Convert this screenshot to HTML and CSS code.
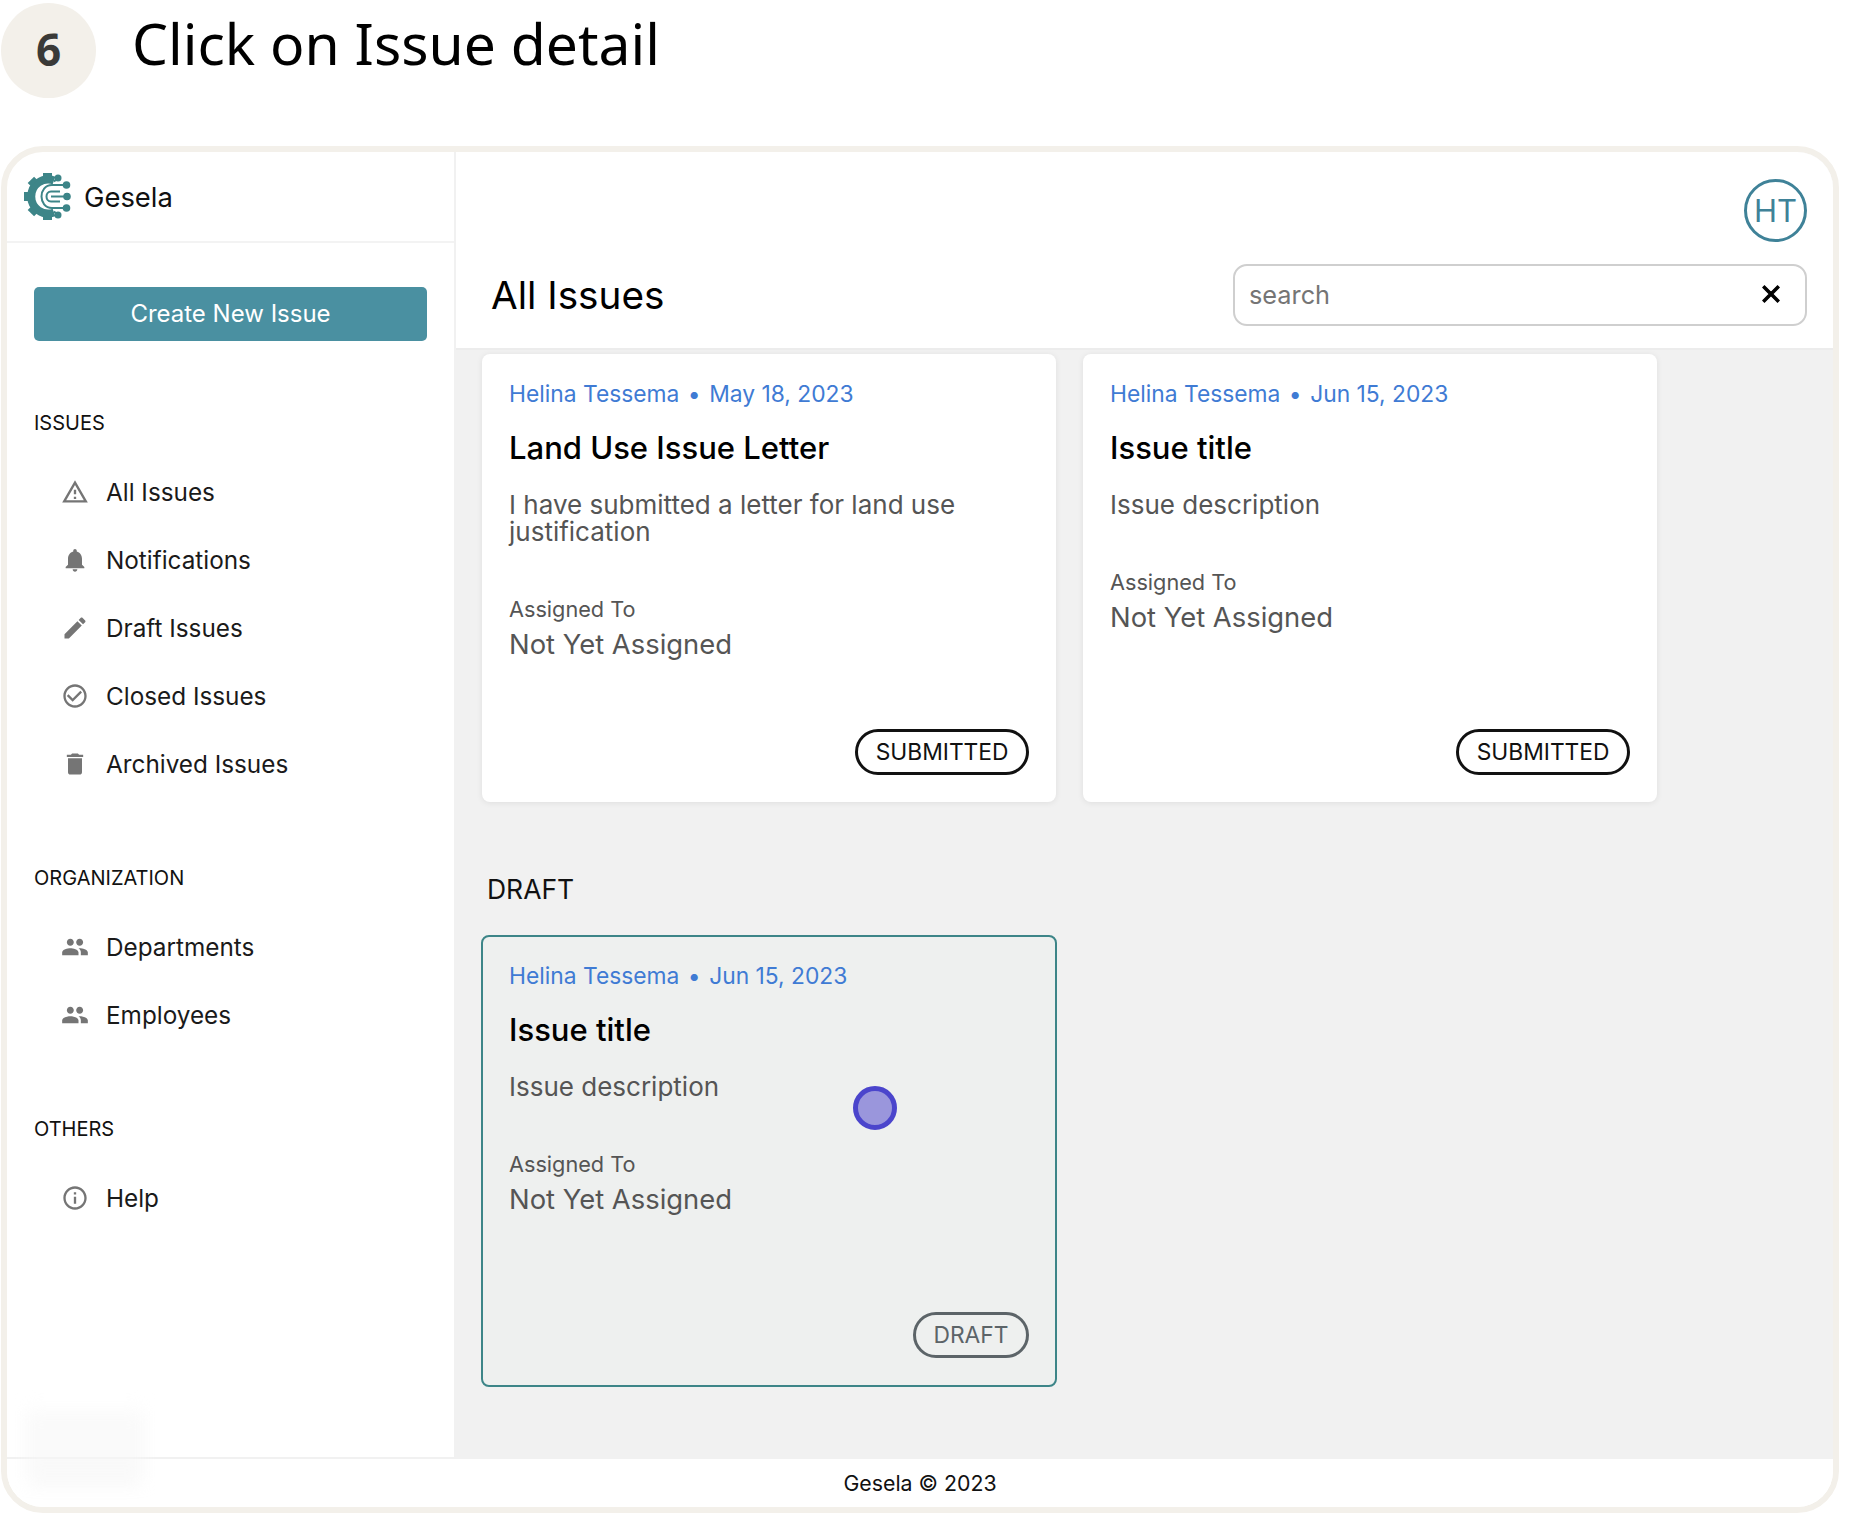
FILE: index.html
```html
<!DOCTYPE html>
<html lang="en">

<head>
  <meta charset="UTF-8">
  <meta name="viewport" content="width=device-width, initial-scale=1.0">
  <title>Click on Issue detail</title>
  <link rel="stylesheet" href="styles.css">
</head>

<body>
  <!--step heading-->
  <div class="step">
    <div class="step-num">6</div>
    <h1 class="step-title">Click on Issue detail</h1>
  </div>

  <div class="frame">
    <div class="app">
      <aside class="sidebar">
        <div class="brand">
          <svg class="logo" viewBox="0 0 47 49" fill="none" stroke="#3d8588">
            <path d="M30 8.500A17 17 0 1 0 30 40.500" stroke-width="8" />
            <g fill="#3d8588" stroke="none">
              <rect x="19" y="1" width="9" height="5" />
              <rect x="19" y="1" width="9" height="5" transform="rotate(-45 23.500 24.500)" />
              <rect x="19" y="1" width="9" height="5" transform="rotate(-90 23.500 24.500)" />
              <rect x="19" y="1" width="9" height="5" transform="rotate(-135 23.500 24.500)" />
              <rect x="19" y="1" width="9" height="5" transform="rotate(180 23.500 24.500)" />
              <circle cx="34" cy="6" r="3.500" />
              <circle cx="42.500" cy="13" r="3.800" />
              <circle cx="43" cy="24.500" r="3.800" />
              <circle cx="42.500" cy="36" r="3.800" />
              <circle cx="34" cy="43" r="3.500" />
            </g>
            <path d="M40 13H28C21 13 17.500 19 17.500 24.500S21 36 28 36H40" stroke-width="2" />
            <path d="M41 24.500H27M36 19.500H27C24 19.500 22.500 22 22.500 24.500S24 29.500 27 29.500H36" stroke-width="2" />
            <path d="M30 9.500 34 6M30 39.500 34 43" stroke-width="2" />
          </svg>
          <span class="brand-name">Gesela</span>
        </div>

        <button class="create-btn">Create New Issue</button>

        <div class="nav-label first">ISSUES</div>
        <a class="nav-item"><svg class="nav-icon" viewBox="0 0 24 24"><path d="M12 5.99L19.53 19H4.47L12 5.99M12 2L1 21h22L12 2zm1 14h-2v2h2v-2zm0-6h-2v4h2v-4z" /></svg>All Issues</a>
        <a class="nav-item"><svg class="nav-icon" viewBox="0 0 24 24"><path d="M12 22c1.1 0 2-.9 2-2h-4c0 1.1.89 2 2 2zm6-6v-5c0-3.07-1.64-5.64-4.5-6.32V4c0-.83-.67-1.5-1.5-1.5s-1.5.67-1.5 1.5v.68C7.63 5.36 6 7.92 6 11v5l-2 2v1h16v-1l-2-2z" /></svg>Notifications</a>
        <a class="nav-item"><svg class="nav-icon" viewBox="0 0 24 24"><path d="M3 17.25V21h3.75L17.81 9.94l-3.75-3.75L3 17.25zM20.71 7.04c.39-.39.39-1.02 0-1.41l-2.34-2.34c-.39-.39-1.02-.39-1.41 0l-1.83 1.83 3.75 3.75 1.83-1.83z" /></svg>Draft Issues</a>
        <a class="nav-item"><svg class="nav-icon" viewBox="0 0 24 24"><path d="M16.59 7.58 10 14.17l-3.59-3.58L5 12l5 5 8-8zM12 2C6.48 2 2 6.48 2 12s4.48 10 10 10 10-4.48 10-10S17.52 2 12 2zm0 18c-4.42 0-8-3.58-8-8s3.58-8 8-8 8 3.58 8 8-3.58 8-8 8z" /></svg>Closed Issues</a>
        <a class="nav-item"><svg class="nav-icon" viewBox="0 0 24 24"><path d="M6 19c0 1.1.9 2 2 2h8c1.1 0 2-.9 2-2V7H6v12zM19 4h-3.5l-1-1h-5l-1 1H5v2h14V4z" /></svg>Archived Issues</a>

        <div class="nav-label">ORGANIZATION</div>
        <a class="nav-item"><svg class="nav-icon" viewBox="0 0 24 24"><path d="M16 11c1.66 0 2.99-1.34 2.99-3S17.66 5 16 5c-1.66 0-3 1.34-3 3s1.34 3 3 3zm-8 0c1.66 0 2.99-1.34 2.99-3S9.66 5 8 5C6.34 5 5 6.34 5 8s1.34 3 3 3zm0 2c-2.33 0-7 1.17-7 3.5V19h14v-2.5c0-2.33-4.67-3.5-7-3.5zm8 0c-.29 0-.62.02-.97.05 1.16.84 1.97 1.97 1.97 3.45V19h6v-2.5c0-2.33-4.67-3.5-7-3.5z" /></svg>Departments</a>
        <a class="nav-item"><svg class="nav-icon" viewBox="0 0 24 24"><path d="M16 11c1.66 0 2.99-1.34 2.99-3S17.66 5 16 5c-1.66 0-3 1.34-3 3s1.34 3 3 3zm-8 0c1.66 0 2.99-1.34 2.99-3S9.66 5 8 5C6.34 5 5 6.34 5 8s1.34 3 3 3zm0 2c-2.33 0-7 1.17-7 3.5V19h14v-2.5c0-2.33-4.67-3.5-7-3.5zm8 0c-.29 0-.62.02-.97.05 1.16.84 1.97 1.97 1.97 3.45V19h6v-2.5c0-2.33-4.67-3.5-7-3.5z" /></svg>Employees</a>

        <div class="nav-label">OTHERS</div>
        <a class="nav-item"><svg class="nav-icon" viewBox="0 0 24 24"><path d="M11 7h2v2h-2zm0 4h2v6h-2zm1-9C6.48 2 2 6.48 2 12s4.48 10 10 10 10-4.48 10-10S17.52 2 12 2zm0 18c-4.42 0-8-3.58-8-8s3.58-8 8-8 8 3.58 8 8-3.58 8-8 8z" /></svg>Help</a>
      </aside>

      <main class="main">
        <header class="topbar">
          <div class="avatar">HT</div>
          <div class="title-row">
            <h2 class="page-title">All Issues</h2>
            <div class="search">
              <span class="search-text">search</span>
              <svg class="search-x" viewBox="0 0 24 24"><path d="M19 6.41 17.59 5 12 10.59 6.41 5 5 6.41 10.59 12 5 17.59 6.41 19 12 13.41 17.59 19 19 17.59 13.41 12z" /></svg>
            </div>
          </div>
        </header>

        <div class="content">
          <div class="card-row">
            <div class="card">
              <div class="meta"><span>Helina Tessema</span><span class="dot">•</span><span>May 18, 2023</span></div>
              <div class="card-title">Land Use Issue Letter</div>
              <p class="card-desc">I have submitted a letter for land use justification</p>
              <div class="assigned">Assigned To</div>
              <div class="assignee">Not Yet Assigned</div>
              <div class="card-foot"><span class="badge">SUBMITTED</span></div>
            </div>
            <div class="card">
              <div class="meta"><span>Helina Tessema</span><span class="dot">•</span><span>Jun 15, 2023</span></div>
              <div class="card-title">Issue title</div>
              <p class="card-desc">Issue description</p>
              <div class="assigned">Assigned To</div>
              <div class="assignee">Not Yet Assigned</div>
              <div class="card-foot"><span class="badge">SUBMITTED</span></div>
            </div>
          </div>

          <div class="group-label">DRAFT</div>
          <div class="card-row">
            <div class="card card-draft">
              <div class="meta"><span>Helina Tessema</span><span class="dot">•</span><span>Jun 15, 2023</span></div>
              <div class="card-title">Issue title</div>
              <p class="card-desc">Issue description</p>
              <div class="assigned">Assigned To</div>
              <div class="assignee">Not Yet Assigned</div>
              <div class="card-foot"><span class="badge badge-draft">DRAFT</span></div>
              <!--click marker-->
              <div class="click-dot"></div>
            </div>
          </div>
        </div>
      </main>
    </div>

    <footer class="footer">Gesela © 2023</footer>
    <div class="smudge"></div>
  </div>
</body>

</html>
```

FILE: styles.css
```css
* {
  margin: 0;
  padding: 0;
  box-sizing: border-box;
}

body {
  background-color: #fff;
  font-family: Inter, "Liberation Sans", sans-serif;
  color: #111;
}

/*step heading*/
.step {
  height: 146px;
  display: flex;
  align-items: flex-start;
  padding: 3px 0 0 1px;
  gap: 36px;
}

.step-num {
  width: 95px;
  height: 95px;
  padding-bottom: 4px;
  border-radius: 50%;
  background-color: #f3f0ea;
  color: #3a3a38;
  font-family: "Noto Sans", sans-serif;
  font-weight: 700;
  font-size: 44px;
  display: flex;
  align-items: center;
  justify-content: center;
}

.step-title {
  font-family: "Noto Sans", sans-serif;
  font-weight: 400;
  font-size: 57px;
  line-height: 80px;
  color: #000;
}

/*outer frame*/
.frame {
  position: relative;
  width: 1838px;
  height: 1367px;
  margin-left: 1px;
  border: 6px solid #f3f0ea;
  border-radius: 42px;
  overflow: hidden;
  display: flex;
  flex-direction: column;
}

.app {
  flex: 1;
  display: flex;
  min-height: 0;
}

/*sidebar*/
.sidebar {
  width: 449px;
  flex-shrink: 0;
  border-right: 2px solid #f1f1f1;
}

.brand {
  height: 91px;
  padding: 20px 0 0 17px;
  display: flex;
  align-items: flex-start;
  gap: 13px;
  border-bottom: 2px solid #f3f3f3;
}

.logo {
  width: 47px;
  height: 49px;
  flex-shrink: 0;
}

.brand-name {
  font-size: 27.400px;
  line-height: 51px;
}

.create-btn {
  display: block;
  width: 393px;
  height: 54px;
  margin: 44px 0 0 27px;
  padding-bottom: 1px;
  border: none;
  border-radius: 5px;
  background-color: #4a90a1;
  color: #fff;
  font-family: inherit;
  font-size: 24px;
}

.nav-label {
  margin: 68px 0 23px 27px;
  font-size: 20px;
  line-height: 24px;
}

.nav-label.first {
  margin-top: 70px;
}

.nav-item {
  height: 68px;
  display: flex;
  align-items: center;
  padding-left: 54px;
  gap: 17px;
  font-size: 24.300px;
  color: #1a1a1a;
}

.nav-icon {
  width: 28px;
  height: 28px;
  fill: #757575;
  flex-shrink: 0;
}

/*main area*/
.main {
  flex: 1;
  display: flex;
  flex-direction: column;
  background-color: #f1f1f1;
  min-width: 0;
}

.topbar {
  height: 198px;
  background-color: #fff;
  border-bottom: 2px solid #ececec;
  padding: 27px 26px 0 35px;
}

.avatar {
  width: 63px;
  height: 63px;
  margin-left: auto;
  border: 3px solid #3f8298;
  border-radius: 50%;
  color: #3f8298;
  font-size: 31px;
  display: flex;
  align-items: center;
  justify-content: center;
}

.title-row {
  display: flex;
  align-items: center;
  justify-content: space-between;
  margin-top: 22px;
}

.page-title {
  font-weight: 400;
  font-size: 38.700px;
  color: #000;
}

.search {
  width: 574px;
  height: 62px;
  border: 2px solid #cfcfcf;
  border-radius: 14px;
  background-color: #fff;
  display: flex;
  align-items: center;
  justify-content: space-between;
  padding: 0 20px 2px 14px;
}

.search-text {
  font-size: 25.300px;
  color: #757575;
}

.search-x {
  width: 28px;
  height: 28px;
  fill: #000;
  stroke: #000;
  stroke-width: 1;
}

.content {
  flex: 1;
  padding: 4px 0 0 26px;
}

.card-row {
  display: grid;
  grid-template-columns: 574px 574px;
  column-gap: 27px;
}

/*issue cards*/
.card {
  position: relative;
  height: 448px;
  padding: 25px 27px 27px 27px;
  background-color: #fff;
  border-radius: 8px;
  box-shadow: 0 1px 6px rgba(0, 0, 0, 0.08);
  display: flex;
  flex-direction: column;
}

.card-draft {
  height: 452px;
  margin: 0 -1px;
  padding: 24px 26px 27px 26px;
  background-color: #eef0ef;
  border: 2px solid #3d8588;
  box-shadow: none;
}

.meta {
  display: flex;
  gap: 8.500px;
  font-size: 22.800px;
  line-height: 30px;
  color: #3f7bd4;
}

.card-title {
  margin-top: 19px;
  font-size: 31px;
  font-weight: 500;
  line-height: 40px;
  color: #000;
}

.card-desc {
  margin-top: 23px;
  font-size: 26px;
  line-height: 27px;
  color: #555;
}

.assigned {
  margin-top: 51px;
  font-size: 21.700px;
  line-height: 26px;
  color: #555;
}

.assignee {
  margin-top: 6px;
  font-size: 27.400px;
  line-height: 32px;
  color: #555;
}

.card-foot {
  margin-top: auto;
  display: flex;
  justify-content: flex-end;
}

.badge {
  height: 46px;
  padding: 0 17.500px;
  border: 3px solid #111;
  border-radius: 23px;
  font-size: 22.800px;
  line-height: 40px;
  color: #111;
}

.badge-draft {
  border-color: #5c6468;
  color: #5c6468;
}

.group-label {
  margin: 72px 0 31px 5px;
  font-size: 26.500px;
  line-height: 30px;
  color: #111;
}

/*click marker on the draft card*/
.click-dot {
  position: absolute;
  left: 370px;
  top: 149px;
  width: 44px;
  height: 44px;
  border: 5px solid #4b45cc;
  border-radius: 50%;
  background-color: #9a96dc;
}

.footer {
  height: 50px;
  flex-shrink: 0;
  border-top: 2px solid #f1f1f1;
  background-color: #fff;
  display: flex;
  align-items: center;
  justify-content: center;
  font-size: 21.300px;
  color: #111;
}

/*faint blurred patch over the bottom left corner*/
.smudge {
  position: absolute;
  left: 18px;
  bottom: 30px;
  width: 120px;
  height: 66px;
  background-color: rgba(247, 247, 247, 0.6);
  box-shadow: 0 12px 8px -6px rgba(0, 0, 0, 0.05);
  filter: blur(9px);
}
```
